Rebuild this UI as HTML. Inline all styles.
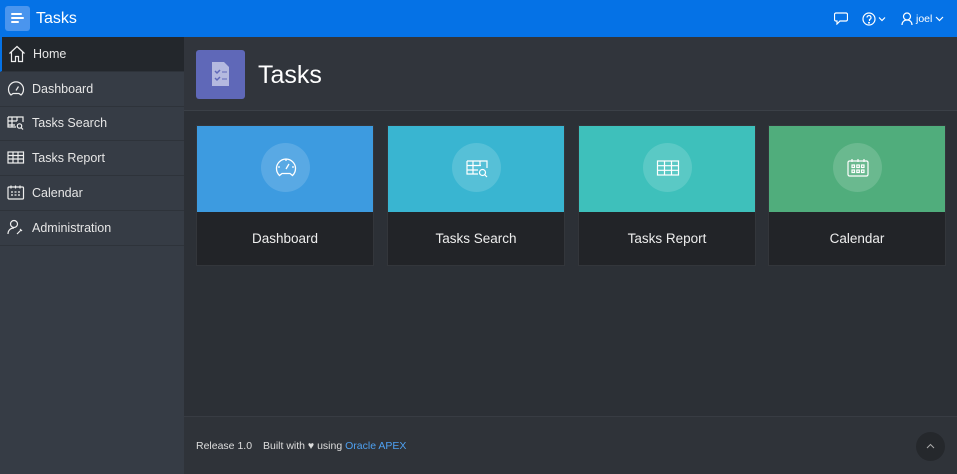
<!DOCTYPE html><html><head><style>
*{margin:0;padding:0;box-sizing:border-box}
body{width:957px;height:474px;overflow:hidden;background:#2c3036;font-family:"Liberation Sans",sans-serif;position:relative;color:#e8e8e8}
.top{position:absolute;left:0;top:0;width:957px;height:37px;background:#0572e6}
.burger{position:absolute;left:5px;top:6px;width:25px;height:25px;background:#4a95ee;border-radius:3px}
.burger i{position:absolute;left:6px;height:2px;background:#fff;border-radius:1px}
.ttl{position:absolute;left:36px;top:10px;font-size:16px;color:#fff}
.side{position:absolute;left:0;top:37px;width:184px;height:437px;background:#363c45}
.it{position:absolute;left:0;width:184px;height:35px;border-bottom:1px solid #2e333a;font-size:12.5px;color:#e6e6e6}
.it span{position:absolute;left:32px;top:10px}
.it svg{position:absolute;left:7px;top:8px}
.act{background:#23272c;border-left:2px solid #0572e6}
.act span{left:31px}.act svg{left:6px}
.ph{position:absolute;left:184px;top:37px;width:773px;height:74px;background:#31353c;border-bottom:1px solid #3b4047}
.logo{position:absolute;left:12px;top:13px;width:49px;height:49px;background:#5f68b8;border-radius:3px}
.h1{position:absolute;left:74px;top:24px;font-size:25px;color:#fff}
.card{position:absolute;top:125px;width:178px;height:141px;background:#222428;border:1px solid #33363b}
.card .t{height:86px;position:relative}
.card .c{position:absolute;left:64px;top:17px;width:49px;height:49px;border-radius:50%;background:rgba(255,255,255,.15)}
.card .c svg{position:absolute;left:12.5px;top:12.5px}
.card .l{text-align:center;font-size:13.5px;margin-top:19px;color:#eee}
.foot{position:absolute;left:184px;top:416px;width:773px;height:58px;background:#2f3339;border-top:1px solid #383c43;font-size:10.5px;color:#ddd}
.up{position:absolute;left:732px;top:15px;width:29px;height:29px;border-radius:50%;background:#25282c}
</style></head><body>
<div class="top">
<div class="burger"><i style="top:7px;width:11px"></i><i style="top:11px;width:13px"></i><i style="top:15px;width:8px"></i></div>
<div class="ttl">Tasks</div>
<svg style="position:absolute;left:834px;top:12px" width="14" height="13" fill="none" stroke="#fff" stroke-width="1.2"><path d="M2 1h10a1.5 1.5 0 0 1 1.5 1.5v5A1.5 1.5 0 0 1 12 9H6l-3 3V9H2A1.5 1.5 0 0 1 .5 7.5v-5A1.5 1.5 0 0 1 2 1z"/></svg>
<svg style="position:absolute;left:862px;top:12px" width="28" height="14" fill="none" stroke="#fff" stroke-width="1.2"><circle cx="7" cy="7" r="6"/><path d="M5 5.5a2 2 0 1 1 2.5 2V9"/><circle cx="7" cy="10.7" r=".4" fill="#fff"/><path d="M17 5.5l3 3 3-3"/></svg>
<svg style="position:absolute;left:901px;top:12px" width="14" height="14" fill="none" stroke="#fff" stroke-width="1.2"><circle cx="6" cy="4.5" r="3.5"/><path d="M1 13c0-3 2-5 5-5s5 2 5 5"/></svg>
<span style="position:absolute;left:916px;top:13px;font-size:10.5px;color:#fff">joel</span>
<svg style="position:absolute;left:935px;top:16px" width="9" height="6" fill="none" stroke="#fff" stroke-width="1.2"><path d="M1 1l3.5 3.5L8 1"/></svg>
</div>
<div class="side">
<div class="it act" style="top:0"><svg width="18" height="18" fill="none" stroke="#eee" stroke-width="1.2"><path d="M1.5 8.5L9 1.5 16.5 8.5M3.5 7V16.5h4v-5h3v5h4V7"/></svg><span>Home</span></div>
<div class="it" style="top:35px"><svg width="18" height="18" fill="none" stroke="#eee" stroke-width="1.2"><path d="M4 15a7.5 7.5 0 1 1 10 0l-2-1.5H6z"/><path d="M9 10.5l2.5-4"/></svg><span>Dashboard</span></div>
<div class="it" style="top:69px"><svg width="18" height="18" fill="none" stroke="#eee" stroke-width="1.2"><path d="M1 3h15v5M1 3v10h8M1 7h9M1 11h7M5 3v10M10 3v4"/><circle cx="12.5" cy="12" r="2.2"/><path d="M14 13.5l2 2"/></svg><span>Tasks Search</span></div>
<div class="it" style="top:104px"><svg width="18" height="18" fill="none" stroke="#eee" stroke-width="1.2"><rect x="1" y="3" width="15.5" height="11"/><path d="M1 6.5h15.5M1 10h15.5M6 3v11M11 3v11"/></svg><span>Tasks Report</span></div>
<div class="it" style="top:139px"><svg width="18" height="18" fill="none" stroke="#eee" stroke-width="1.2"><rect x="1" y="3" width="15.5" height="12" rx="1"/><path d="M4 1.5v3M8.5 1.5v3M13 1.5v3M4 8h2M7.5 8h2M11 8h2M4 11h2M7.5 11h2M11 11h2"/></svg><span>Calendar</span></div>
<div class="it" style="top:174px"><svg width="18" height="18" fill="none" stroke="#eee" stroke-width="1.2"><circle cx="7" cy="5" r="3.5"/><path d="M1 15c0-3.5 2.5-6 6-6M10 15l4-4M13 10l2 2"/></svg><span>Administration</span></div>
</div>
<div class="ph"><div class="logo"><svg style="position:absolute;left:15px;top:11px" width="19" height="26"><path d="M1 1h12l5 5v19H1z" fill="#c9cde8" opacity=".8"/><path d="M4 10l2 2 3-3M4 17l2 2 3-3" stroke="#5f68b8" stroke-width="1.5" fill="none"/><path d="M11 11h5M11 18h5" stroke="#5f68b8"/></svg></div><div class="h1">Tasks</div></div>
<div class="card" style="left:196px"><div class="t" style="background:#3d9be0"><div class="c"><svg width="24" height="24" fill="none" stroke="#fff" stroke-width="1.3"><path d="M5.5 19.5a9.5 9.5 0 1 1 13 0l-2.5-2h-8z"/><path d="M12 13l3-5M12 3v2M4 11h2M18 11h2"/></svg></div></div><div class="l">Dashboard</div></div>
<div class="card" style="left:387px"><div class="t" style="background:#39b5d1"><div class="c"><svg width="24" height="24" fill="none" stroke="#fff" stroke-width="1.2"><path d="M2 5h20v7M2 5v13h11M2 9.5h14M2 14h11M8 5v13M15 5v5"/><circle cx="17.5" cy="16.5" r="3"/><path d="M19.5 18.5l2.5 2.5"/></svg></div></div><div class="l">Tasks Search</div></div>
<div class="card" style="left:578px"><div class="t" style="background:#3ec0bb"><div class="c"><svg width="24" height="24" fill="none" stroke="#fff" stroke-width="1.2"><rect x="1.5" y="5" width="21" height="14"/><path d="M1.5 9.7h21M1.5 14.3h21M8.5 5v14M15.5 5v14"/></svg></div></div><div class="l">Tasks Report</div></div>
<div class="card" style="left:768px"><div class="t" style="background:#50ad7c"><div class="c"><svg width="24" height="24" fill="none" stroke="#fff" stroke-width="1.2"><rect x="2" y="5" width="20" height="15" rx="1.5"/><path d="M6 3v3M12 3v3M18 3v3"/><rect x="6" y="9" width="2.5" height="2.5"/><rect x="10.8" y="9" width="2.5" height="2.5"/><rect x="15.5" y="9" width="2.5" height="2.5"/><rect x="6" y="14" width="2.5" height="2.5"/><rect x="10.8" y="14" width="2.5" height="2.5"/><rect x="15.5" y="14" width="2.5" height="2.5"/></svg></div></div><div class="l">Calendar</div></div>
<div class="foot"><span style="position:absolute;left:12px;top:23px">Release 1.0</span><span style="position:absolute;left:79px;top:23px">Built with ♥ using <span style="color:#4ea0f0">Oracle APEX</span></span><div class="up"><svg style="position:absolute;left:10px;top:11px" width="9" height="6" fill="none" stroke="#aaa" stroke-width="1"><path d="M1 5l3.5-3.5L8 5"/></svg></div></div>
</body></html>
